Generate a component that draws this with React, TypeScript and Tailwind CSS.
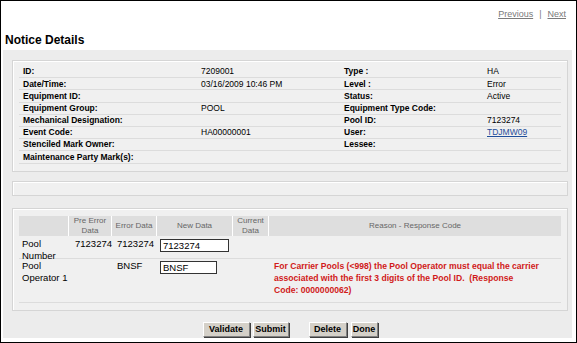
import React from 'react';

const font = { fontFamily: '"Liberation Sans", Arial, sans-serif' };

type Pair = [string, string, string, string, boolean?];

// label / value / label / value / value2 is a link
const detailRows: Pair[] = [
  ['ID:', '7209001', 'Type :', 'HA'],
  ['Date/Time:', '03/16/2009 10:46 PM', 'Level :', 'Error'],
  ['Equipment ID:', '', 'Status:', 'Active'],
  ['Equipment Group:', 'POOL', 'Equipment Type Code:', ''],
  ['Mechanical Designation:', '', 'Pool ID:', '7123274'],
  ['Event Code:', 'HA00000001', 'User:', 'TDJMW09', true],
  ['Stenciled Mark Owner:', '', 'Lessee:', ''],
  ['Maintenance Party Mark(s):', '', '', ''],
];

const headers: React.ReactNode[] = [
  '',
  <>Pre Error<br />Data</>,
  'Error Data',
  'New Data',
  <>Current<br />Data</>,
  'Reason - Response Code',
];

const Box = ({ className = '', children }: { className?: string; children?: React.ReactNode }) => (
  <div className={`border border-[#d5d5d5] bg-[#f0f0f0] shadow-[inset_1px_1px_0_#ffffff] ${className}`}>{children}</div>
);

const Btn = ({ label, w }: { label: string; w: string }) => (
  <button className={`${w} h-[15px] bg-[#d4d0c8] text-[9px] font-bold leading-none text-black border border-t-white border-l-white border-r-[#808080] border-b-[#808080] shadow-[1px_1px_0_#404040]`}>
    {label}
  </button>
);

const App = () => {
  return (
    <div style={font} className="w-[577px] h-[343px] border border-black bg-white flex flex-col overflow-hidden text-black">
      <div className="h-[49px] flex flex-col">
        <div className="flex justify-end items-center gap-[6px] pr-[10px] pt-[7px] text-[9px] text-[#7a7a7a]">
          <span className="underline">Previous</span>
          <span>|</span>
          <span className="underline">Next</span>
        </div>
        <h1 className="mt-[11px] pl-[4px] text-[12px] font-bold leading-[14px]">Notice Details</h1>
      </div>

      <div className="flex-1 ml-[2px] mr-[4px] mb-[4px] bg-[#ececec] pt-[10px] pl-[9px] pr-[4px] flex flex-col">
        <Box className="h-[112px] pt-[5px] px-[6px]">
          {detailRows.map(([l1, v1, l2, v2, link], i) => (
            <div
              key={i}
              className="grid grid-cols-[178px_143px_143px_1fr] h-[12.2px] items-center pl-[4px] border-b border-[#dcdcdc] text-[8.5px] leading-none"
            >
              <span className="font-bold">{l1}</span>
              <span>{v1}</span>
              <span className="font-bold">{l2}</span>
              <span className={link ? 'text-[#1f4e9a] underline' : ''}>{v2}</span>
            </div>
          ))}
        </Box>

        <Box className="mt-[9px] h-[15px]" />

        <Box className="mt-[12px] h-[103px] pt-[7px] px-[6px]">
          <div className="grid grid-cols-[50px_43px_45px_76px_36px_1fr] text-[9.5px] leading-[11.5px]">
            {headers.map((h, i) => (
              <div
                key={i}
                className={`h-[20px] bg-[#dedede] flex items-center justify-center text-center text-[8px] leading-[10px] text-[#666] border-white ${i < 5 ? 'border-r' : ''}`}
              >
                <span>{h}</span>
              </div>
            ))}

            <div className="pl-[3px] pt-[2px] h-[23px] border-b border-[#dcdcdc]">Pool Number</div>
            <div className="pl-[6px] pt-[2px] border-b border-[#dcdcdc]">7123274</div>
            <div className="pl-[5px] pt-[2px] border-b border-[#dcdcdc]">7123274</div>
            <div className="pl-[3px] pt-[3px] border-b border-[#dcdcdc]">
              <div className="w-[69px] h-[13px] bg-white border border-[#333] pl-[2px] leading-[11px]">7123274</div>
            </div>
            <div className="border-b border-[#dcdcdc]" />
            <div className="border-b border-[#dcdcdc]" />

            <div className="pl-[3px] pt-[1px] h-[44px] border-b border-[#dcdcdc]">Pool Operator 1</div>
            <div className="border-b border-[#dcdcdc]" />
            <div className="pl-[5px] pt-[1px] border-b border-[#dcdcdc]">BNSF</div>
            <div className="pl-[3px] pt-[2px] border-b border-[#dcdcdc]">
              <div className="w-[57px] h-[13px] bg-white border border-[#333] pl-[2px] leading-[11px]">BNSF</div>
            </div>
            <div className="border-b border-[#dcdcdc] col-span-2 pl-[41px] pt-[1px] text-[8.6px] leading-[12px] font-bold text-[#d11a1a] whitespace-nowrap">
              For Carrier Pools (&lt;998) the Pool Operator must equal the carrier
              <br />
              associated with the first 3 digits of the Pool ID.&nbsp; (Response
              <br />
              Code: 0000000062)
            </div>
          </div>
        </Box>

        <div className="mt-[11px] flex justify-center items-start">
          <div className="flex gap-[3px]">
            <Btn label="Validate" w="w-[47px]" />
            <Btn label="Submit" w="w-[36px]" />
          </div>
          <div className="flex gap-[4px] ml-[20px]">
            <Btn label="Delete" w="w-[38px]" />
            <Btn label="Done" w="w-[27px]" />
          </div>
        </div>
      </div>
    </div>
  );
};

export default App;
